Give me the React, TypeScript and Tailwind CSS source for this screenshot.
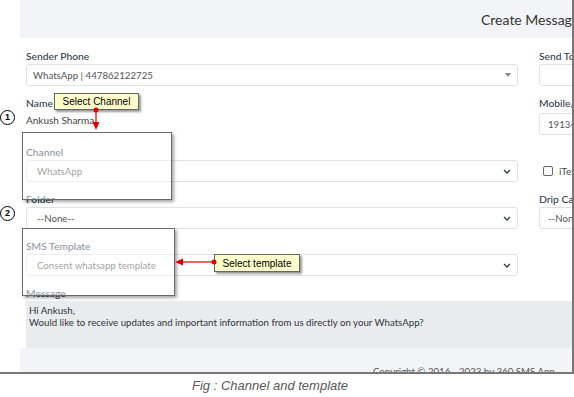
import React from 'react';

const Chevron = () => (
  <svg width="8" height="5" viewBox="0 0 8 5" className="ml-auto">
    <path d="M1 1 L4 4 L7 1" fill="none" stroke="#343a40" strokeWidth="1.3" />
  </svg>
);

const Label = ({ children }: { children: React.ReactNode }) => (
  <div className="h-[14px] leading-[14px] mb-[1px] text-[10.3px] font-medium text-[#2f3e52] whitespace-nowrap">
    {children}
  </div>
);

const Select = ({ value, pad = 'pl-[10px]' }: { value: string; pad?: string }) => (
  <div
    className={`h-[22px] border border-[#dee2e6] rounded-[3px] bg-white flex items-center ${pad} pr-[6px] text-[9.7px] text-[#555] whitespace-nowrap`}
  >
    <span>{value}</span>
    <Chevron />
  </div>
);

export default function App() {
  return (
    <div className="relative w-[574px] h-[397px] bg-white overflow-hidden font-['Lato',sans-serif]">
      <div className="w-[574px] h-[374px] border-r-2 border-b-2 border-[#787878] flex overflow-hidden">
        <div className="w-[20px] shrink-0 bg-white"></div>
        <div className="flex-1 flex flex-col overflow-hidden">
          <div className="h-[38px] shrink-0 bg-[#f3f4f8] flex items-center pl-[461px] text-[14px] text-[#333] whitespace-nowrap">
            Create Message
          </div>

          <div className="h-[310px] shrink-0 px-[6px] pt-[11px] grid grid-cols-[492px_200px] gap-x-[21px] gap-y-[10px] content-start">
            <div>
              <Label>Sender Phone</Label>
              <div className="h-[22px] border border-[#dee2e6] rounded-[3px] flex items-center pl-[6px] pr-[6px] text-[9.7px] text-[#555]">
                <span>WhatsApp | 447862122725</span>
                <span className="ml-auto w-0 h-0 border-l-[3px] border-r-[3px] border-t-[4px] border-l-transparent border-r-transparent border-t-[#888]"></span>
              </div>
            </div>
            <div>
              <Label>Send To</Label>
              <div className="h-[22px] border border-[#dee2e6] rounded-[3px]"></div>
            </div>

            <div className="h-[39px]">
              <Label>Name</Label>
              <div className="mt-[3px] text-[10px] text-[#444] leading-[14px]">Ankush Sharma</div>
            </div>
            <div>
              <div className="h-[14px] leading-[14px] mb-[3px] text-[10.3px] font-medium text-[#2f3e52] whitespace-nowrap">
                Mobile/Phone
              </div>
              <div className="h-[22px] border border-[#dee2e6] rounded-[3px] flex items-center pl-[8px] text-[9.7px] text-[#555]">
                19134567890
              </div>
            </div>

            <div>
              <Label>Channel</Label>
              <Select value="WhatsApp" />
            </div>
            <div className="self-end h-[22px] flex items-center pl-[4px] gap-[6px] text-[10px] text-[#444] whitespace-nowrap">
              <span className="w-[10px] h-[10px] border border-[#666] rounded-[2px] bg-white"></span>
              iText
            </div>

            <div>
              <Label>Folder</Label>
              <Select value="--None--" />
            </div>
            <div>
              <Label>Drip Campaign</Label>
              <Select value="--None--" pad="pl-[8px]" />
            </div>

            <div>
              <Label>SMS Template</Label>
              <Select value="Consent whatsapp template" />
            </div>
            <div></div>

            <div className="col-span-2">
              <Label>Message</Label>
              <div className="h-[47px] bg-[#e9ecef] pl-[3px] pt-[3px] text-[9.7px] leading-[12px] text-[#333] whitespace-nowrap">
                <div>Hi Ankush,</div>
                <div>Would like to receive updates and important information from us directly on your WhatsApp?</div>
              </div>
            </div>
          </div>

          <div className="flex-1 bg-[#f3f4f8] pl-[353px] pt-[16px] text-[9.7px] text-[#555] whitespace-nowrap overflow-hidden">
            Copyright © 2016 - 2023 by 360 SMS App
          </div>
        </div>
      </div>

      <div className="pt-[4px] pl-[192px] text-[13px] leading-[15px] italic text-[#595959] font-['Liberation_Sans',sans-serif]">
        Fig : Channel and template
      </div>

      {/* highlight boxes */}
      <div className="absolute left-[22px] top-[132px] w-[150px] h-[68px] border-[1.5px] border-[#6a6a6a] bg-white/45 shadow-[2px_2px_3px_rgba(0,0,0,0.35)]"></div>
      <div className="absolute left-[22px] top-[228px] w-[153px] h-[68px] border-[1.5px] border-[#6a6a6a] bg-white/45 shadow-[2px_2px_3px_rgba(0,0,0,0.35)]"></div>

      {/* step numbers */}
      <div className="absolute left-0 top-[110px] w-[15px] h-[15px] rounded-full border-[1.5px] border-black bg-white flex items-center justify-center text-[9px] font-bold text-black font-['Liberation_Sans',sans-serif]">
        1
      </div>
      <div className="absolute left-0 top-[206px] w-[15px] h-[15px] rounded-full border-[1.5px] border-black bg-white flex items-center justify-center text-[9px] font-bold text-black font-['Liberation_Sans',sans-serif]">
        2
      </div>

      {/* callouts */}
      <div className="absolute left-[54px] top-[93px] w-[85px] h-[17px] bg-[#ffffcc] border border-[#666] shadow-[2px_2px_2px_rgba(0,0,0,0.4)] flex items-center justify-center text-[10px] text-black font-['Liberation_Sans',sans-serif]">
        Select Channel
      </div>
      <div className="absolute left-[214px] top-[254px] w-[86px] h-[18px] bg-[#ffffcc] border border-[#666] shadow-[2px_2px_2px_rgba(0,0,0,0.4)] flex items-center justify-center text-[10px] text-black font-['Liberation_Sans',sans-serif]">
        Select template
      </div>

      <svg className="absolute left-0 top-0 pointer-events-none" width="574" height="397">
        <line x1="96" y1="110" x2="96" y2="123" stroke="#e00000" strokeWidth="1.2" />
        <polygon points="96,130 92.5,122 99.5,122" fill="#e00000" />
        <circle cx="96" cy="110" r="2.5" fill="#e00000" />
        <line x1="214" y1="262" x2="182" y2="262" stroke="#e00000" strokeWidth="1.2" />
        <polygon points="175,262 183,258.5 183,265.5" fill="#e00000" />
        <circle cx="214" cy="262" r="2.5" fill="#e00000" />
      </svg>
    </div>
  );
}
